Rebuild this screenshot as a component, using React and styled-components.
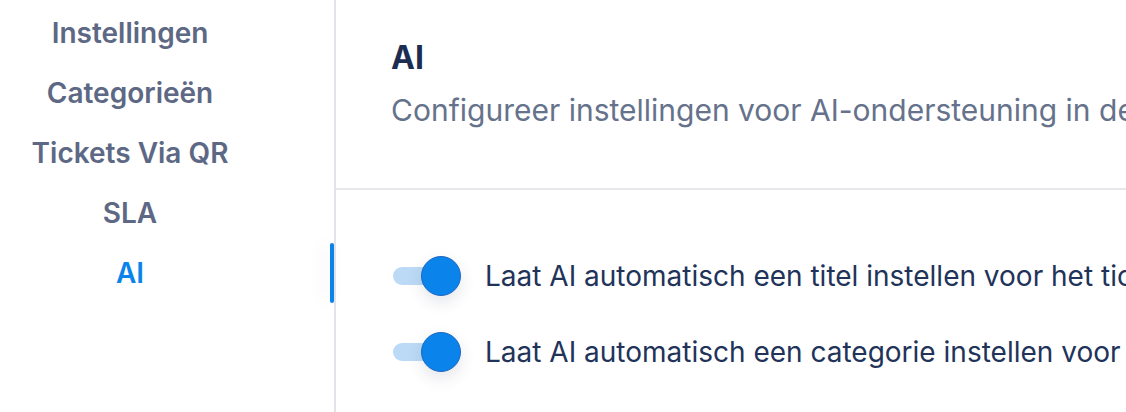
import React from 'react';
import styled, { createGlobalStyle } from 'styled-components';

const GlobalStyle = createGlobalStyle`
    body {
        margin: 0;
        background: #ffffff;
        font-family: Inter, "Noto Sans", sans-serif;
        overflow: hidden;
    }
`;

const Page = styled.div`
    display: flex;
    width: 1126px;
    height: 412px;
    overflow: hidden;
`;

const Sidebar = styled.nav`
    width: 334px;
    flex-shrink: 0;
    border-right: 2px solid #e3e4e9;
    display: flex;
    flex-direction: column;
    padding-top: 3px;
`;

const NavItem = styled.div`
    position: relative;
    height: 60px;
    display: flex;
    align-items: center;
    justify-content: center;
    padding-right: 74px;
    font-size: 28px;
    font-weight: 600;
    color: ${({active}) => active ? '#0a84ea' : '#5d6884'};
`;

const Indicator = styled.span`
    position: absolute;
    right: 0;
    top: 0;
    width: 4px;
    height: 60px;
    border-radius: 2px;
    background: #0a84ea;
    box-shadow: -6px 0 18px rgba(30, 40, 80, 0.08);
`;

const Main = styled.main`
    flex: 1;
    display: flex;
    flex-direction: column;
    min-width: 0;
`;

const Header = styled.header`
    height: 190px;
    border-bottom: 2px solid #e6e7eb;
    padding: 38px 0 0 55px;
    box-sizing: border-box;
`;

const Title = styled.h1`
    margin: 0;
    font-size: 32px;
    font-weight: 700;
    line-height: 40px;
    color: #1d2d52;
`;

const Subtitle = styled.p`
    margin: 14px 0 0;
    font-size: 30px;
    line-height: 36px;
    color: #66728b;
    white-space: nowrap;
`;

const Options = styled.div`
    display: flex;
    flex-direction: column;
    gap: 36px;
    padding: 66px 0 0 57px;
`;

const Row = styled.label`
    display: flex;
    align-items: center;
    gap: 24px;
    height: 40px;
    white-space: nowrap;
    font-size: 28px;
    color: #22335a;
`;

const Switch = styled.span`
    position: relative;
    width: 68px;
    height: 40px;
    flex-shrink: 0;
`;

const Track = styled.span`
    position: absolute;
    left: 0;
    top: 11px;
    width: 60px;
    height: 18px;
    border-radius: 9px;
    background: ${({on}) => on ? '#bcdaf6' : '#d8dbe2'};
`;

const Knob = styled.span`
    position: absolute;
    top: 0;
    ${({on}) => on ? 'right: 0;' : 'left: 0;'}
    width: 40px;
    height: 40px;
    box-sizing: border-box;
    border-radius: 50%;
    background: #0a84ea;
    border: 1px solid #1f68c2;
    box-shadow: 0 6px 16px rgba(30, 40, 80, 0.12);
`;

const Toggle = ({on}) => (
    <Switch>
        <Track on={on} />
        <Knob on={on} />
    </Switch>
);

const items = ['Instellingen', 'Categorieën', 'Tickets Via QR', 'SLA', 'AI'];

const App = () => (
    <Page>
        <GlobalStyle />
        <Sidebar>
            {items.map((item) => (
                <NavItem key={item} active={item === 'AI'}>
                    {item}
                    {item === 'AI' && <Indicator />}
                </NavItem>
            ))}
        </Sidebar>
        <Main>
            <Header>
                <Title>AI</Title>
                <Subtitle>Configureer instellingen voor AI-ondersteuning in de tickets</Subtitle>
            </Header>
            <Options>
                <Row>
                    <Toggle on />
                    Laat AI automatisch een titel instellen voor het ticket
                </Row>
                <Row>
                    <Toggle on />
                    Laat AI automatisch een categorie instellen voor het ticket
                </Row>
            </Options>
        </Main>
    </Page>
);

export default App;
